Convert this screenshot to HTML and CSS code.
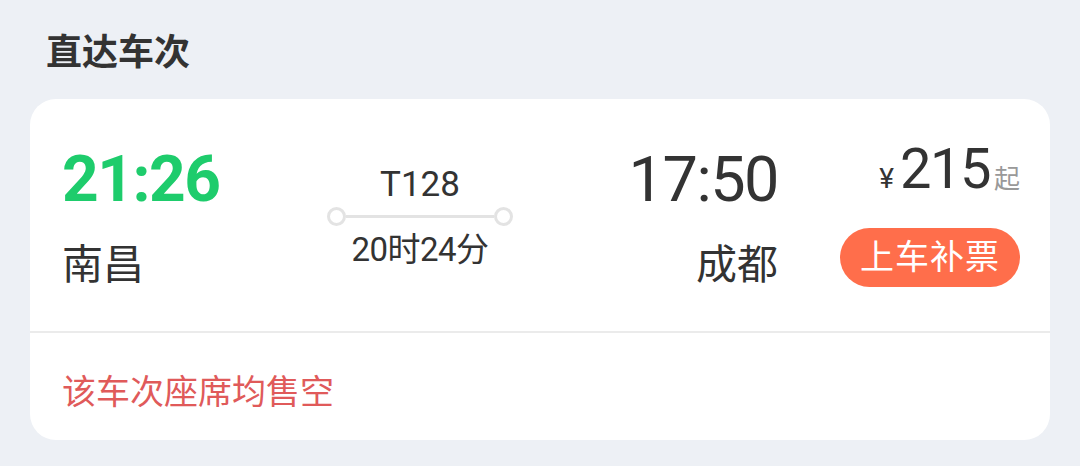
FILE: index.html
```html
<!DOCTYPE html>
<html lang="zh">
<head>
<meta charset="utf-8">
<link rel="stylesheet" href="styles.css">
</head>
<body>
<div class="page">
  <h2 class="title">直达车次</h2>
  <div class="card">
    <div class="main">
      <div class="col dep">
        <div class="time green">21:26</div>
        <div class="station">南昌</div>
      </div>
      <div class="col mid">
        <div class="train">T128</div>
        <div class="track">
          <span class="dot"></span>
          <span class="bar"></span>
          <span class="dot"></span>
        </div>
        <div class="dur">20时24分</div>
      </div>
      <div class="col arr">
        <div class="time">17:50</div>
        <div class="station">成都</div>
      </div>
      <div class="col price">
        <div class="amount"><span class="yen">¥</span><span class="num">215</span><span class="qi">起</span></div>
        <div class="btn">上车补票</div>
      </div>
    </div>
    <div class="foot">该车次座席均售空</div>
  </div>
</div>
</body>
</html>
```
FILE: styles.css
```css
* { box-sizing: border-box; margin: 0; padding: 0; }
html, body { width: 1080px; height: 466px; overflow: hidden; }
body {
  background: #edf0f5;
  font-family: Roboto, "Noto Sans CJK SC", sans-serif;
  color: #333;
}
.page { padding: 30px 30px 0 30px; }
.title {
  font-size: 36px;
  font-weight: 700;
  line-height: 46px;
  padding-left: 16px;
  color: #333;
  margin-bottom: 23px;
}
.card {
  background: #fff;
  border-radius: 26px;
  height: 341px;
}
.main {
  display: flex;
  height: 234px;
  padding: 0 30px 0 32px;
  border-bottom: 2px solid #ebebeb;
}
.col { display: flex; flex-direction: column; }
.dep { width: 240px; padding-top: 42px; }
.mid { width: 236px; align-items: center; padding-top: 66px; }
.arr { width: 240px; align-items: flex-end; padding-top: 42px; }
.price { width: 242px; align-items: flex-end; padding-top: 40px; }
.time {
  font-size: 63px;
  line-height: 78px;
  font-weight: 400;
  color: #333;
  letter-spacing: -1.5px;
}
.time.green { color: #1ecc6c; font-weight: 700; letter-spacing: -1.5px; font-size: 64px; }
.station {
  font-size: 41px;
  line-height: 52px;
  margin-top: 20px;
  color: #333;
}
.train { font-size: 35px; line-height: 40px; color: #333; }
.track {
  display: flex;
  align-items: center;
  width: 186px;
  margin-top: 2px;
}
.dot {
  width: 19px; height: 19px;
  border: 3px solid #e3e3e3;
  border-radius: 50%;
  flex: none;
}
.bar { flex: 1; height: 3px; background: #e3e3e3; }
.dur { font-size: 33px; line-height: 42px; margin-top: 3px; color: #333; letter-spacing: -0.5px; }
.amount { display: flex; align-items: baseline; line-height: 60px; }
.yen { font-size: 28px; color: #333; margin-right: 6px; }
.num { font-size: 56px; color: #333; letter-spacing: -1.5px; }
.qi { font-size: 26px; color: #999; margin-left: 4px; }
.btn {
  margin-top: 19px;
  height: 59px;
  padding: 0 20px;
  border-radius: 30px;
  background: #ff6e4b;
  color: #fff;
  font-size: 34px;
  line-height: 59px;
  letter-spacing: 1px;
}
.foot {
  padding: 37px 0 0 32px;
  font-size: 34px;
  line-height: 44px;
  color: #e05a5a;
}
```
